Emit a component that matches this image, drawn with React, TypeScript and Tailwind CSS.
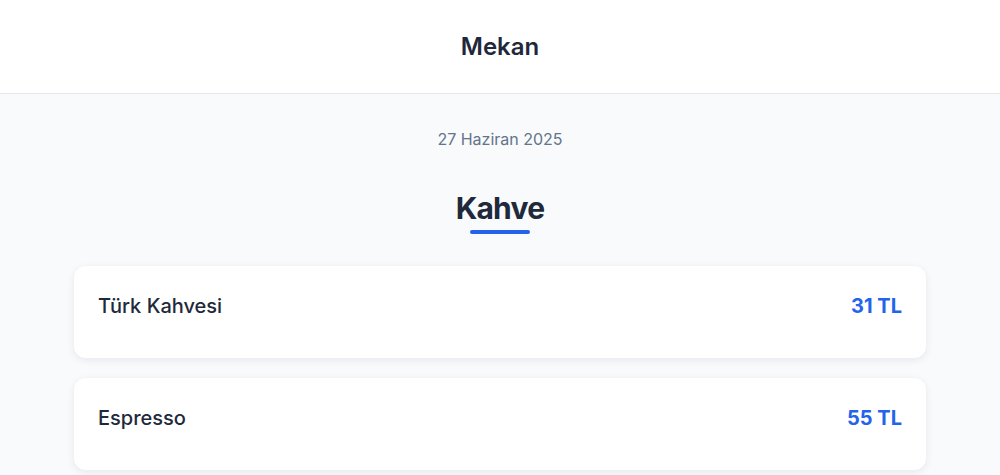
import React from 'react';

const items = [
  { name: 'Türk Kahvesi', price: '31 TL' },
  { name: 'Espresso', price: '55 TL' },
];

const App = () => {
  return (
    <div className="min-h-screen bg-[#f8fafc] font-['Inter',sans-serif] text-[#1e293b]">
      <header className="h-[94px] bg-white border-b border-[#e5e7eb] flex items-center justify-center">
        <h1 className="text-2xl font-semibold">Mekan</h1>
      </header>
      <main className="pt-[33px] pb-10">
        <p className="text-center text-base text-[#64748b]">27 Haziran 2025</p>
        <section className="mt-[39px]">
          <div className="flex flex-col items-center">
            <h2 className="text-3xl font-bold leading-9 tracking-tight">Kahve</h2>
            <div className="mt-1 h-1 w-[60px] rounded-full bg-[#2563eb]" />
          </div>
          <div className="mt-8 w-[852px] mx-auto flex flex-col gap-5">
            {items.map((item) => (
              <div
                key={item.name}
                className="bg-white rounded-xl shadow-[0_2px_8px_rgba(15,23,42,0.08)] px-6 pt-[26px] pb-[38px] flex items-start justify-between"
              >
                <span className="text-xl font-medium leading-7">{item.name}</span>
                <span className="text-xl font-bold leading-7 text-[#2563eb]">{item.price}</span>
              </div>
            ))}
          </div>
        </section>
      </main>
    </div>
  );
};

export default App;
